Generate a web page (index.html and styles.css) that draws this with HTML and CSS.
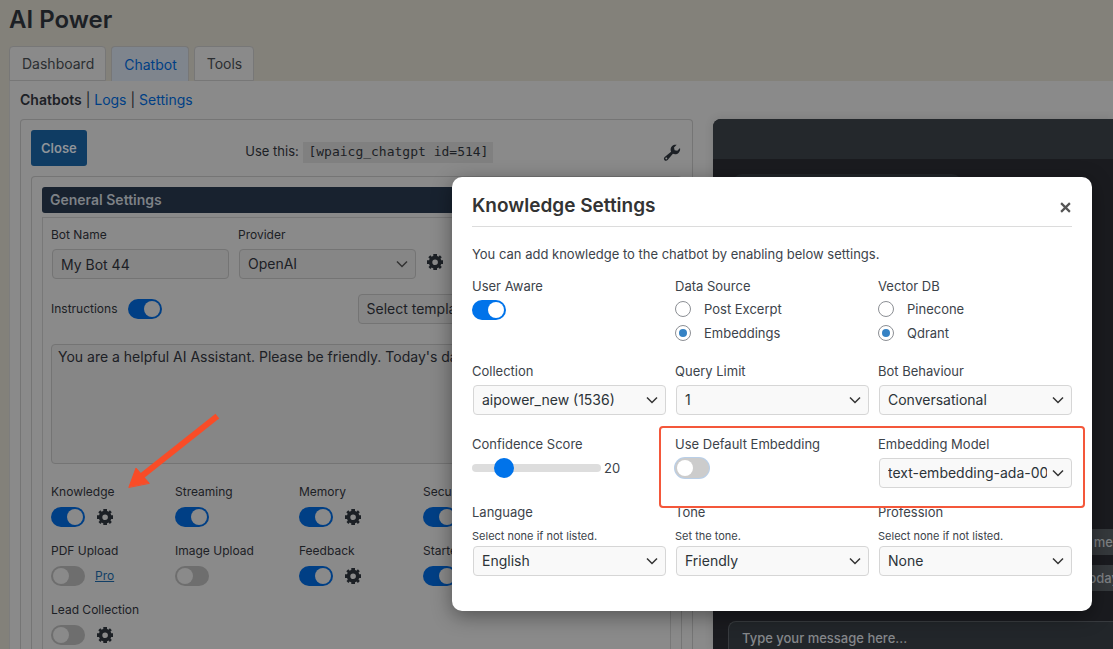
FILE: index.html
```html
<!DOCTYPE html>
<html lang="en">
<head>
<meta charset="utf-8">
<title>AI Power</title>
<link rel="stylesheet" href="styles.css">
</head>
<body>
<svg class="defs" aria-hidden="true">
  <symbol id="gear" viewBox="0 0 20 20"><path fill-rule="evenodd" d="M18 12h-1.800c-.2.600-.4 1.100-.7 1.600l1.300 1.400-1.900 1.900-1.400-1.300c-.5.300-1 .5-1.500.700V18H8.300v-1.700c-.6-.2-1.100-.4-1.600-.7l-1.300 1.300-1.900-1.900 1.300-1.300c-.3-.5-.5-1-.7-1.700H2V8.300h2.100c.1-.6.300-1.100.6-1.600L3.300 5.300l2-2 1.400 1.400c.5-.3 1-.5 1.600-.7V2H12v2c.6.200 1.100.4 1.500.7l1.400-1.400 1.900 2-1.300 1.300c.3.500.5 1.100.7 1.700H18zM10.100 7.400a2.800 2.800 0 1 0 0 5.600 2.800 2.800 0 0 0 0-5.600z"/></symbol>
  <symbol id="wrench" viewBox="0 0 20 20"><path fill-rule="evenodd" d="M16.700 9.700c-1.600 1.600-3.900 1.900-5.800 1L5.600 17c-.8 1-2.200 1-3.100.200-.8-.9-.8-2.300.200-3.100l6.400-5.300C8.200 6.900 8.500 4.700 10.100 3.100c1.300-1.300 3-1.700 4.600-1.300L12 4.600l.6 2.600 2.700.600L18 5.100c.4 1.600 0 3.400-1.300 4.600zM5 16.100c.4-.4.4-1 0-1.400s-1-.4-1.400 0-.4 1 0 1.400 1 .4 1.400 0z"/></symbol>
</svg>

<div class="page">
  <h1 class="page-title">AI Power</h1>
  <nav class="tabs">
    <a class="tab" href="#">Dashboard</a>
    <a class="tab tab-active" href="#">Chatbot</a>
    <a class="tab" href="#">Tools</a>
  </nav>

  <main class="panel">
    <nav class="subnav"><b>Chatbots</b> | <a href="#">Logs</a> | <a href="#">Settings</a></nav>

    <div class="columns">
      <section class="card">
        <header class="card-top">
          <button class="close-button" type="button">Close</button>
          <p class="shortcode">Use this: <code>[wpaicg_chatgpt id=514]</code></p>
          <button class="icon-button tool-button" type="button" aria-label="Tools"><svg class="icon"><use href="#wrench"/></svg></button>
        </header>

        <div class="box">
          <h2 class="box-title">General Settings</h2>
          <div class="box-body">
            <div class="identity">
              <div class="field"><label for="bot">Bot Name</label><input class="control" id="bot" type="text" value="My Bot 44"></div>
              <div class="field"><label for="provider">Provider</label><select class="control" id="provider"><option>OpenAI</option></select></div>
              <button class="icon-button" type="button" aria-label="Provider settings"><svg class="icon"><use href="#gear"/></svg></button>
            </div>
            <div class="instructions">
              <label for="inst">Instructions</label>
              <input class="toggle" id="inst" type="checkbox" checked>
              <select class="control template" aria-label="Template"><option>Select template</option></select>
            </div>
            <textarea class="prompt" aria-label="Instructions text">You are a helpful AI Assistant. Please be friendly. Today's date</textarea>

            <div class="features">
              <div class="feature"><label for="f1">Knowledge</label><div class="switch"><input class="toggle" id="f1" type="checkbox" checked><button class="icon-button" type="button" aria-label="Knowledge settings"><svg class="icon"><use href="#gear"/></svg></button></div></div>
              <div class="feature"><label for="f2">Streaming</label><div class="switch"><input class="toggle" id="f2" type="checkbox" checked></div></div>
              <div class="feature"><label for="f3">Memory</label><div class="switch"><input class="toggle" id="f3" type="checkbox" checked><button class="icon-button" type="button" aria-label="Memory settings"><svg class="icon"><use href="#gear"/></svg></button></div></div>
              <div class="feature"><label for="f4">Security</label><div class="switch"><input class="toggle" id="f4" type="checkbox" checked></div></div>
              <div class="feature"><label for="f5">PDF Upload</label><div class="switch"><input class="toggle" id="f5" type="checkbox"><a class="pro" href="#">Pro</a></div></div>
              <div class="feature"><label for="f6">Image Upload</label><div class="switch"><input class="toggle" id="f6" type="checkbox"></div></div>
              <div class="feature"><label for="f7">Feedback</label><div class="switch"><input class="toggle" id="f7" type="checkbox" checked><button class="icon-button" type="button" aria-label="Feedback settings"><svg class="icon"><use href="#gear"/></svg></button></div></div>
              <div class="feature"><label for="f8">Starters</label><div class="switch"><input class="toggle" id="f8" type="checkbox" checked></div></div>
              <div class="feature"><label for="f9">Lead Collection</label><div class="switch"><input class="toggle" id="f9" type="checkbox"><button class="icon-button" type="button" aria-label="Lead settings"><svg class="icon"><use href="#gear"/></svg></button></div></div>
            </div>
          </div>
        </div>
      </section>

      <section class="chat">
        <div class="chat-header"></div>
        <div class="chat-log">
          <div class="bubble bubble-bot"></div>
          <div class="bubble bubble-user push">me</div>
          <div class="bubble bubble-user bubble-wide">today</div>
        </div>
        <input class="chat-input" type="text" placeholder="Type your message here..." aria-label="Message">
      </section>
    </div>
  </main>
</div>

<svg class="arrow" viewBox="0 0 100 80" aria-hidden="true">
  <path d="M92 9 20 66" />
  <path class="arrow-head" d="M6 78 13 59 26 74Z" />
</svg>

<div class="modal" role="dialog" aria-labelledby="modal-title">
  <header class="modal-header">
    <h2 id="modal-title">Knowledge Settings</h2>
    <button class="modal-close" type="button" aria-label="Close"><svg viewBox="0 0 10 10"><path d="M1 1 9 9M9 1 1 9"/></svg></button>
  </header>
  <p class="intro">You can add knowledge to the chatbot by enabling below settings.</p>

  <div class="row row-sources">
    <div class="field"><label for="aware">User Aware</label><input class="toggle" id="aware" type="checkbox" checked></div>
    <fieldset class="field"><legend>Data Source</legend>
      <label class="choice"><input type="radio" name="src"><span>Post Excerpt</span></label>
      <label class="choice"><input type="radio" name="src" checked><span>Embeddings</span></label>
    </fieldset>
    <fieldset class="field"><legend>Vector DB</legend>
      <label class="choice"><input type="radio" name="db"><span>Pinecone</span></label>
      <label class="choice"><input type="radio" name="db" checked><span>Qdrant</span></label>
    </fieldset>
  </div>
  <div class="row row-collection">
    <div class="field"><label for="coll">Collection</label><select class="control" id="coll"><option>aipower_new (1536)</option></select></div>
    <div class="field"><label for="limit">Query Limit</label><select class="control" id="limit"><option>1</option></select></div>
    <div class="field"><label for="behav">Bot Behaviour</label><select class="control" id="behav"><option>Conversational</option></select></div>
  </div>
  <div class="row row-embedding">
    <div class="field"><label for="score">Confidence Score</label><div class="slider"><input id="score" type="range" min="0" max="100" value="20"><output for="score">20</output></div></div>
    <div class="field"><label for="default">Use Default Embedding</label><input class="toggle toggle-focus" id="default" type="checkbox"></div>
    <div class="field"><label for="model">Embedding Model</label><select class="control" id="model"><option>text-embedding-ada-002</option></select></div>
  </div>
  <div class="row row-persona">
    <div class="field"><label for="lang">Language</label><small>Select none if not listed.</small><select class="control" id="lang"><option>English</option></select></div>
    <div class="field"><label for="tone">Tone</label><small>Set the tone.</small><select class="control" id="tone"><option>Friendly</option></select></div>
    <div class="field"><label for="prof">Profession</label><small>Select none if not listed.</small><select class="control" id="prof"><option>None</option></select></div>
  </div>
  <div class="highlight"></div>
</div>
</body>
</html>
```
FILE: styles.css
```css
* { box-sizing: border-box; }

body {
  margin: 0;
  height: 100vh;
  overflow: hidden;
  background: #83817a;
  color: #1c2025;
  font: 13px/16px Inter, "Noto Sans", sans-serif;
}

h1, h2, p { margin: 0; }
button, input, select, textarea { font: inherit; color: inherit; margin: 0; }
a { color: #003f85; text-decoration: none; }
.defs { display: none; }

.page {
  display: flex;
  flex-direction: column;
  height: 100vh;
  padding: 5px 0 0 9px;
}
.page-title { font-size: 24px; line-height: 30px; font-weight: 600; }

.tabs { display: flex; gap: 5px; margin-top: 11px; }
.tab {
  height: 35px;
  padding: 0 11px 0 12px;
  border: 1px solid #777;
  border-radius: 4px 4px 0 0;
  background: #8a8a8a;
  color: #2b2e31;
  font-size: 14px;
  line-height: 34px;
}
.tab-active { background: #7f858d; color: #003f85; border-bottom: 0; line-height: 36px; }

.panel {
  flex: 1;
  display: flex;
  flex-direction: column;
  min-height: 0;
  padding: 11px 0 0 10px;
  border-left: 1px solid #7d7d7d;
  background: #8a8a8a;
}
.subnav { font-size: 14px; }
.subnav b { font-weight: 600; }

.columns {
  flex: 1;
  display: flex;
  gap: 20px;
  min-height: 0;
  margin-top: 11px;
}
.card {
  flex: 0 0 673px;
  display: flex;
  flex-direction: column;
  padding: 10px 10px 0;
  border: 1px solid #757575;
  border-bottom: 0;
  border-radius: 4px 4px 0 0;
}
.card-top { display: flex; align-items: center; justify-content: space-between; }
.close-button {
  height: 36px;
  padding: 0 10px;
  border: 0;
  border-radius: 3px;
  background: #0f3c63;
  color: #8f9499;
  font-weight: 600;
}
.shortcode { padding: 9px 10px 0 0; }
.shortcode code {
  display: inline-block;
  padding: 2px 5px 3px;
  margin-left: 1px;
  background: #808080;
  font: 13px/16px "DejaVu Sans Mono", monospace;
}
.icon-button {
  display: flex;
  padding: 0;
  border: 0;
  background: none;
}
.icon { width: 20px; height: 20px; fill: #1c2025; }
.tool-button { padding-top: 10px; }

.box {
  flex: 1;
  display: flex;
  flex-direction: column;
  margin-top: 10px;
  padding: 10px 10px 0;
  border: 1px solid #757575;
  border-bottom: 0;
  border-radius: 4px 4px 0 0;
}
.box-title {
  padding: 0 8px;
  border-radius: 3px;
  background: #18222f;
  color: #7d8186;
  font-size: 14px;
  line-height: 26px;
  font-weight: 600;
}
.box-body {
  flex: 1;
  margin-top: 4px;
  padding: 9px 8px 0;
  border: 1px solid #787878;
  border-bottom: 0;
  font-size: 12px;
}

.field { display: flex; flex-direction: column; min-width: 0; gap: 6px; }
.control {
  width: 100%;
  height: 30px;
  padding: 0 8px;
  border: 1px solid #747474;
  border-radius: 4px;
  background: #868686;
  font-size: 14px;
  appearance: none;
}
select.control {
  padding-right: 24px;
  background-image: url("data:image/svg+xml,%3Csvg xmlns='http://www.w3.org/2000/svg' width='12' height='8'%3E%3Cpath d='M1 1.500 6 6.500 11 1.500' fill='none' stroke='%23333333' stroke-width='1.500'/%3E%3C/svg%3E");
  background-repeat: no-repeat;
  background-position: right 7px center;
}

.identity { display: flex; align-items: flex-end; gap: 9px; }
.identity .field { width: 178px; }
.identity .control { margin-left: 1px; width: 177px; }
.identity .icon-button { padding-bottom: 7px; }

.instructions { display: flex; align-items: center; gap: 10px; margin-top: 15px; }
.template { width: 200px; margin-left: 186px; }

.toggle {
  display: grid;
  align-items: center;
  width: 34px;
  height: 20px;
  padding: 0 2px;
  border-radius: 10px;
  background: #6e6e6e;
  appearance: none;
}
.toggle::before {
  content: "";
  width: 16px;
  height: 16px;
  border-radius: 50%;
  background: #8a8a8a;
}
.toggle:checked { background: #003f85; }
.toggle:checked::before { justify-self: end; }

.prompt {
  display: block;
  width: 100%;
  height: 120px;
  margin-top: 20px;
  padding: 4px 6px;
  border: 1px solid #747474;
  border-radius: 4px;
  background: #868686;
  font-size: 14px;
  resize: none;
}

.features {
  display: grid;
  grid-template-columns: repeat(4, 124px);
  row-gap: 16px;
  margin-top: 20px;
}
.feature { display: grid; gap: 7px; }
.switch { display: flex; align-items: center; gap: 10px; height: 20px; }
.pro { text-decoration: underline; color: #123f66; }

.chat {
  flex: 1;
  display: flex;
  flex-direction: column;
  border-radius: 8px 0 0 0;
  background: #1a1b1f;
  overflow: hidden;
  box-shadow: 0 0 10px rgb(0 0 0 / 12%);
}
.chat-header { height: 40px; background: #24282c; }
.chat-log {
  flex: 1;
  display: flex;
  flex-direction: column;
  gap: 10px;
  padding: 15px 0 30px 15px;
}
.bubble {
  height: 26px;
  border-radius: 10px;
  background: #212529;
  color: #7d8083;
  font-weight: 500;
  line-height: 26px;
  text-align: right;
}
.bubble-bot { width: 230px; margin-left: 4px; }
.bubble-user { align-self: flex-end; width: 140px; border-radius: 8px 0 0 8px; background: #35393c; }
.bubble-wide { margin-right: -6px; }
.push { margin-top: auto; }
.chat-input {
  height: 28px;
  margin-left: 15px;
  padding: 4px 13px 0;
  border: 1px solid #383b3f;
  border-width: 1px 0 0 1px;
  border-radius: 8px 0 0 0;
  background: #22262a;
  font-weight: 500;
}
.chat-input::placeholder { color: #85878a; opacity: 1; }

.arrow {
  position: absolute;
  left: 123px;
  top: 409px;
  width: 100px;
  height: 80px;
  fill: none;
  stroke: #f94c27;
  stroke-width: 6;
  stroke-linecap: square;
}
.arrow-head { fill: #f94c27; stroke-width: 1; stroke-linejoin: round; }

.modal {
  position: absolute;
  left: 452px;
  top: 177px;
  width: 640px;
  padding: 13px 20px 35px;
  border-radius: 10px;
  background: #fff;
  color: #3c434a;
  box-shadow: 0 5px 20px rgb(0 0 0 / 40%);
}
.modal-header {
  display: flex;
  align-items: center;
  justify-content: space-between;
  padding-bottom: 4px;
  border-bottom: 1px solid #dcdcdc;
}
.modal-header h2 { color: #333; font-size: 19px; line-height: 32px; font-weight: 600; }
.modal-close { display: flex; padding: 2px 1px 0; border: 0; background: none; }
.modal-close svg { width: 11px; height: 11px; fill: none; stroke: #555; stroke-width: 2; }
.intro { margin-top: 19px; }

.row { display: grid; grid-template-columns: repeat(3, 1fr); gap: 9px; }
.row-sources { margin-top: 16px; }
.row-collection { margin-top: 18px; }
.row-embedding { margin-top: 21px; }
.row-persona { margin-top: 16px; }
.row-persona .field { gap: 2px; }
.row small { margin-top: 6px; font-size: 11px; line-height: 16px; }

.modal .control {
  width: auto;
  margin-left: 1px;
  border-color: #d6d6d6;
  background-color: #f9f9f9;
  color: #2c3338;
}
.modal .toggle { background: #ccc; }
.modal .toggle::before { background: #fff; }
.modal .toggle:checked { background: #0073ea; }
.modal .toggle-focus { box-shadow: 0 0 0 1px #b9cfe8; }

fieldset.field { display: block; margin: 0; padding: 0; border: 0; }
legend { padding: 0; margin-bottom: 3px; }
.choice { display: flex; align-items: center; gap: 13px; height: 24px; }
.choice input {
  display: grid;
  place-items: center;
  width: 16px;
  height: 16px;
  border: 1px solid #8c8f94;
  border-radius: 50%;
  background: #fff;
  appearance: none;
}
.choice input:checked::before {
  content: "";
  width: 8px;
  height: 8px;
  border-radius: 50%;
  background: #3582c4;
}

.slider { display: flex; align-items: center; gap: 3px; height: 20px; }
.slider input {
  width: 129px;
  height: 8px;
  border-radius: 4px;
  background: #ddd;
  appearance: none;
}
.slider input::-webkit-slider-thumb {
  width: 20px;
  height: 20px;
  border-radius: 50%;
  background: #0073ea;
  appearance: none;
}

.highlight {
  position: absolute;
  inset: 249px 7px 103px 207px;
  border: 2px solid #f4573a;
  border-radius: 4px;
  pointer-events: none;
}
```
